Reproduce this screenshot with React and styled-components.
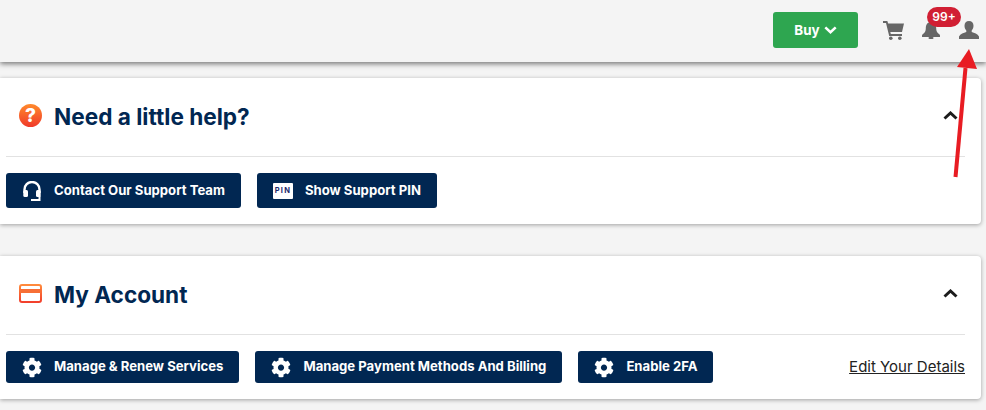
import React from "react";
import styled, { createGlobalStyle } from "styled-components";
import { FaCog } from "react-icons/fa";

const GlobalStyle = createGlobalStyle`
  html, body {
    margin: 0;
    background: #f4f4f4;
    overflow: hidden;
  }
  body {
    font-family: Inter, "Liberation Sans", sans-serif;
  }
`;

const Page = styled.div`
  position: relative;
  width: 986px;
  height: 410px;
  overflow: hidden;
`;

const Header = styled.header`
  height: 62px;
  background: #f4f4f4;
  box-shadow: 0 2px 5px rgba(0, 0, 0, 0.5);
  display: flex;
  align-items: center;
  justify-content: flex-end;
  box-sizing: border-box;
  padding: 0 6px 2px 0;
`;

const BuyButton = styled.button`
  width: 85px;
  height: 36px;
  border: 0;
  border-radius: 3px;
  background: #2ea650;
  color: #fff;
  font: 700 13.4px Inter, sans-serif;
  display: flex;
  align-items: center;
  justify-content: center;
  gap: 4px;
  margin-right: 25px;
`;

const IconLink = styled.div`
  position: relative;
  color: #666;
  display: flex;
  justify-content: center;
  width: ${(p) => p.$width}px;
  margin-right: ${(p) => p.$gap}px;
`;

const Badge = styled.span`
  position: absolute;
  left: 5px;
  top: -14px;
  width: 34px;
  height: 20px;
  border-radius: 10px;
  background: #d11f33;
  color: #fff;
  font-size: 12px;
  font-weight: 600;
  line-height: 20px;
  text-align: center;
`;

const Main = styled.main`
  width: 981px;
  padding-top: 16px;
  display: flex;
  flex-direction: column;
  gap: 32px;
`;

const Card = styled.section`
  background: #fff;
  border-radius: 0 4px 4px 0;
  box-shadow: 0 1px 4px rgba(0, 0, 0, 0.35);
  padding: 0 16px 16px 6px;
`;

const CardHead = styled.div`
  height: 79px;
  border-bottom: 1px solid #e2e2e2;
  display: flex;
  align-items: center;
  padding-left: 13px;
  box-sizing: border-box;
`;

const HeadIcon = styled.div`
  width: 23px;
  height: 23px;
  margin-right: 12px;
  margin-top: -3px;
  display: flex;
  align-items: center;
  justify-content: center;
`;

const HelpDot = styled.span`
  width: 23px;
  height: 23px;
  border-radius: 50%;
  background: linear-gradient(#ff8a2c, #f03a2a);
  color: #fff;
  font-size: 19px;
  font-weight: 800;
  line-height: 23px;
  text-align: center;
`;

const Title = styled.h2`
  margin: 0;
  flex: 1;
  color: #012752;
  font-size: 22.6px;
  font-weight: 700;
  line-height: 1;
`;

const Collapse = styled.div`
  display: flex;
  margin-right: 7px;
  margin-top: -4px;
`;

const Actions = styled.div`
  display: flex;
  align-items: center;
  gap: 16px;
  padding-top: 16px;
`;

const ActionButton = styled.button`
  height: ${(p) => p.$height}px;
  border: 0;
  border-radius: 3px;
  background: #012752;
  color: #fff;
  font: 700 13.14px Inter, sans-serif;
  display: flex;
  align-items: center;
  gap: 12px;
  padding: 0 16px 2px;
  white-space: nowrap;
`;

const ButtonIcon = styled.span`
  width: 20px;
  margin-top: 2px;
  display: flex;
  align-items: center;
  justify-content: center;
`;

const PinTag = styled.span`
  width: 20px;
  height: 16px;
  background: #fff;
  border-radius: 1px;
  color: #1c2a6b;
  font-size: 7.5px;
  font-weight: 700;
  letter-spacing: 1.2px;
  line-height: 16px;
  text-align: center;
`;

const EditLink = styled.a`
  margin-left: auto;
  margin-bottom: 2px;
  color: #222;
  font-size: 15px;
  text-decoration: underline;
`;

const Arrow = styled.svg`
  position: absolute;
  left: 945px;
  top: 44px;
`;

const Chevron = ({ up, color, width, height }) => (
  <svg width={width} height={height} viewBox="0 0 15 9" fill="none">
    <path
      d={up ? "M1.500 7.500L7.500 2l6 5.500" : "M1.500 1.500L7.500 7l6-5.500"}
      stroke={color}
      strokeWidth="3"
    />
  </svg>
);

const CartIcon = () => (
  <svg width="21" height="19" viewBox="0 0 21 19" fill="currentColor">
    <path d="M0 0h4.300l.9 2.500H21l-2 8.500H7.300l.5 2H19v2H6.200L3 2H0z" />
    <circle cx="7.800" cy="17.200" r="1.800" />
    <circle cx="16.800" cy="17.200" r="1.800" />
  </svg>
);

const BellIcon = () => (
  <svg width="18" height="18" viewBox="0 0 18 18" fill="currentColor">
    <path d="M9 1c-3.500 0-5.200 2.800-5.200 6.200 0 3-1 4.600-2.800 5.800-.7.500-1 1-1 1.600V16h18v-1.400c0-.6-.3-1.100-1-1.600-1.800-1.200-2.800-2.800-2.800-5.800C14.200 3.800 12.500 1 9 1z" />
    <rect x="6.500" y="16" width="5" height="2" rx="1" />
  </svg>
);

const UserIcon = () => (
  <svg width="20" height="18" viewBox="0 0 20 18" fill="currentColor">
    <path d="M10 0c2.800 0 4.500 2 4.500 4.800 0 2-.8 3.700-1.800 4.800v1.400c2.500 1 6 1.800 7.300 4.500V18H0v-2.500c1.300-2.700 4.800-3.500 7.300-4.500V9.600C6.300 8.500 5.500 6.800 5.500 4.800 5.500 2 7.200 0 10 0z" />
  </svg>
);

const Headset = () => (
  <svg width="18" height="20" viewBox="0 0 18 20" fill="none">
    <path d="M1.500 12V8.500a7.500 7.500 0 0 1 15 0V12" stroke="#fff" strokeWidth="2.400" />
    <rect x="0.300" y="9" width="4.700" height="7" rx="1.500" fill="#fff" />
    <rect x="13" y="9" width="4.700" height="7" rx="1.500" fill="#fff" />
    <path d="M16.500 15v4H8" stroke="#fff" strokeWidth="2" />
  </svg>
);

const CardIcon = () => (
  <svg width="23" height="19" viewBox="0 0 23 19" fill="none">
    <defs>
      <linearGradient id="cardFill" x1="0" y1="0" x2="0" y2="1">
        <stop offset="0" stopColor="#ff8a3c" />
        <stop offset="1" stopColor="#f2402c" />
      </linearGradient>
    </defs>
    <rect x="1" y="1" width="21" height="17" rx="2" stroke="url(#cardFill)" strokeWidth="2" />
    <rect x="1" y="5" width="21" height="4" fill="#f76f36" />
  </svg>
);

function Section({ title, icon, children }) {
  return (
    <Card>
      <CardHead>
        <HeadIcon>{icon}</HeadIcon>
        <Title>{title}</Title>
        <Collapse>
          <Chevron up color="#1c1c1c" width={15} height={9} />
        </Collapse>
      </CardHead>
      <Actions>{children}</Actions>
    </Card>
  );
}

function Action({ height, icon, children }) {
  return (
    <ActionButton $height={height}>
      <ButtonIcon>{icon}</ButtonIcon>
      {children}
    </ActionButton>
  );
}

export default function App() {
  const gear = <FaCog size={21} />;
  return (
    <Page>
      <GlobalStyle />
      <Header>
        <BuyButton>
          Buy <Chevron color="#fff" width={13} height={8} />
        </BuyButton>
        <IconLink $width={21} $gap={18}>
          <CartIcon />
        </IconLink>
        <IconLink $width={18} $gap={18}>
          <BellIcon />
          <Badge>99+</Badge>
        </IconLink>
        <IconLink $width={22} $gap={0}>
          <UserIcon />
        </IconLink>
      </Header>
      <Main>
        <Section title="Need a little help?" icon={<HelpDot>?</HelpDot>}>
          <Action height={35} icon={<Headset />}>Contact Our Support Team</Action>
          <Action height={35} icon={<PinTag>PIN</PinTag>}>Show Support PIN</Action>
        </Section>
        <Section title="My Account" icon={<CardIcon />}>
          <Action height={32} icon={gear}>Manage &amp; Renew Services</Action>
          <Action height={32} icon={gear}>Manage Payment Methods And Billing</Action>
          <Action height={32} icon={gear}>Enable 2FA</Action>
          <EditLink>Edit Your Details</EditLink>
        </Section>
      </Main>
      <Arrow width="40" height="140" viewBox="0 0 40 140">
        <path d="M10.500 133 L20.500 24" stroke="#e81c23" strokeWidth="4" fill="none" />
        <path d="M24 5 L12 23 L32 25 Z" fill="#e81c23" />
      </Arrow>
    </Page>
  );
}
